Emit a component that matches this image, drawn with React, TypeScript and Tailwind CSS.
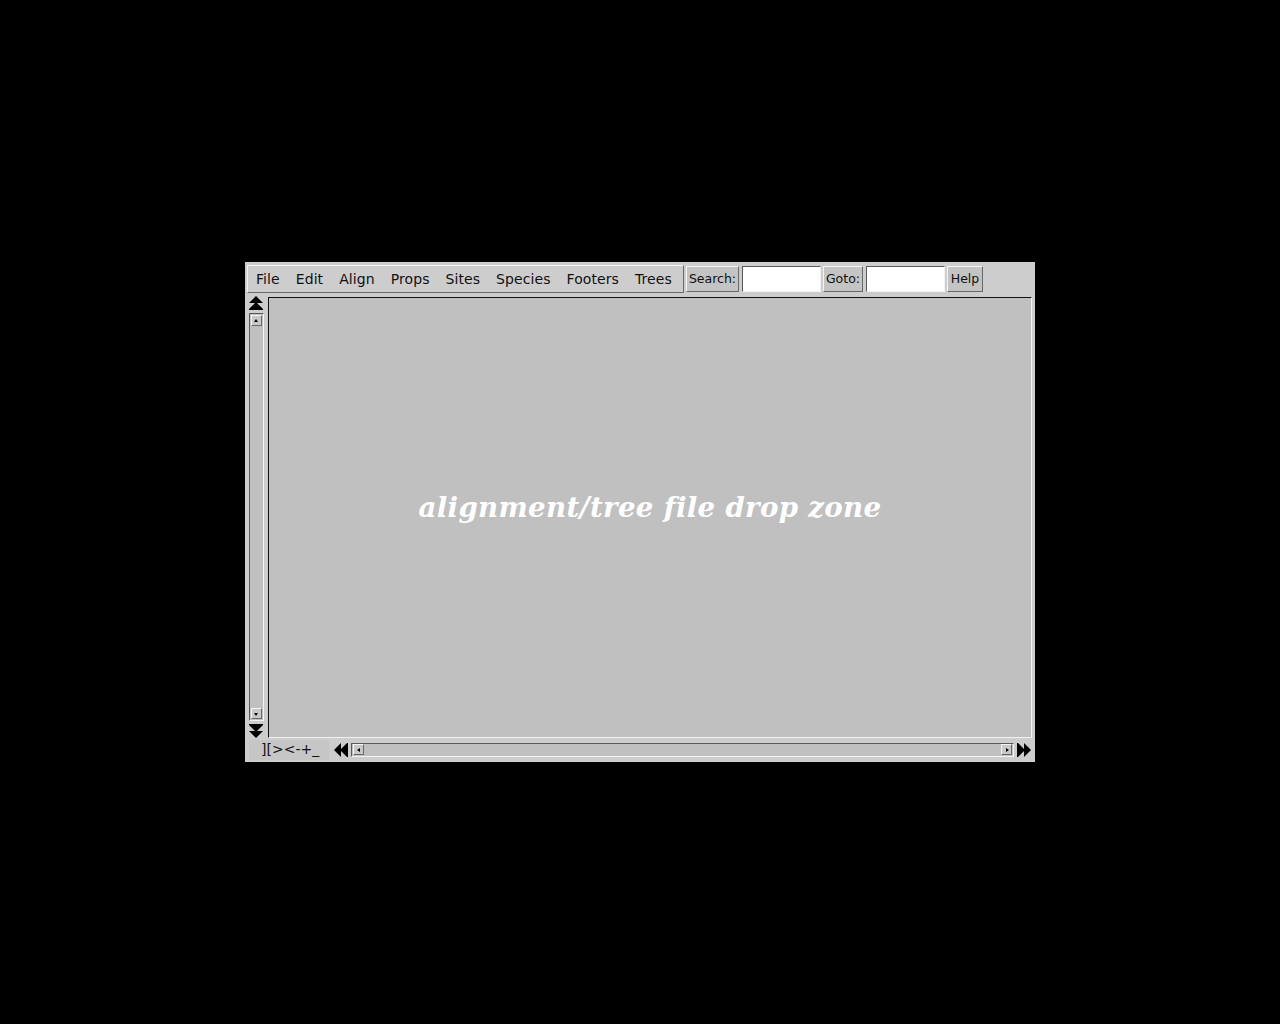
import React from "react";

const menus = ["File", "Edit", "Align", "Props", "Sites", "Species", "Footers", "Trees"];

// raised / sunken bevels, old AWT look
const raised = "border border-t-[#f4f4f4] border-l-[#f4f4f4] border-b-[#6a6a6a] border-r-[#6a6a6a]";
const sunken = "border border-t-[#5a5a5a] border-l-[#5a5a5a] border-b-[#f4f4f4] border-r-[#f4f4f4]";

function DoubleArrow({ dir }: { dir: "up" | "down" | "left" | "right" }) {
  const rot = { up: 0, down: 180, left: 270, right: 90 }[dir];
  return (
    <svg width="14" height="14" viewBox="0 0 14 14">
      <g transform={`rotate(${rot} 7 7)`}>
        <polygon points="7,0 14,7 0,7" fill="#000" />
        <polygon points="7,6 14,13 0,13" fill="#000" />
        <rect x="0" y="13" width="14" height="1" fill="#000" />
      </g>
    </svg>
  );
}

function SmallArrow({ dir }: { dir: "up" | "down" | "left" | "right" }) {
  const pts = {
    up: "2,5 4,2 6,5",
    down: "2,3 4,6 6,3",
    left: "5,2 2,4 5,6",
    right: "3,2 6,4 3,6",
  }[dir];
  return (
    <div className={`w-[11px] h-[11px] bg-[#c8c8c8] flex items-center justify-center ${raised}`}>
      <svg width="8" height="8" viewBox="0 0 8 8">
        <polygon points={pts} fill="#000" />
      </svg>
    </div>
  );
}

export default function App() {
  return (
    <div className="w-screen h-screen bg-black flex items-center justify-center">
      <div
        className="w-[790px] h-[500px] bg-[#cdcdcd] flex flex-col"
        style={{ fontFamily: '"DejaVu Sans", sans-serif' }}
      >
        {/* menu bar */}
        <div className="h-[33px] flex items-center pl-[2px] pt-[1px]">
          <div className={`h-[28px] w-[437px] flex items-center bg-[#cdcdcd] ${raised}`}>
            {menus.map((m) => (
              <span key={m} className="px-2 text-[14px] tracking-[0.08px] text-[#111]">
                {m}
              </span>
            ))}
          </div>
          <div className="flex items-center ml-[2px] text-[12.5px] text-[#111]">
            <div className={`h-[26px] w-[53px] flex items-center justify-center bg-[#c4c4c4] ${raised}`}>Search:</div>
            <div className={`h-[26px] w-[79px] ml-[3px] bg-white ${sunken}`} />
            <div className={`h-[26px] w-[40px] ml-[2px] flex items-center justify-center bg-[#c4c4c4] ${raised}`}>Goto:</div>
            <div className={`h-[26px] w-[79px] ml-[3px] bg-white ${sunken}`} />
            <div className={`h-[26px] w-[36px] ml-[2px] flex items-center justify-center bg-[#c4c4c4] ${raised}`}>Help</div>
          </div>
        </div>

        {/* middle */}
        <div className="flex-1 flex pl-[2px] pr-[3px]">
          <div className="w-[18px] flex flex-col items-center pt-[1px]">
            <DoubleArrow dir="up" />
            <div className={`flex-1 w-[15px] my-[3px] bg-[#c0c0c0] flex flex-col items-center justify-between py-[1px] ${sunken}`}>
              <SmallArrow dir="up" />
              <SmallArrow dir="down" />
            </div>
            <DoubleArrow dir="down" />
          </div>
          <div className="flex-1 ml-[3px] mt-[2px] border border-t-[#111] border-l-[#111] border-b-[#f2f2f2] border-r-[#f2f2f2] bg-[#c0c0c0] flex items-center justify-center pb-[20px]">
            <span
              className="text-white text-[27.7px] font-bold italic tracking-[0.3px]"
              style={{ fontFamily: '"DejaVu Serif", serif' }}
            >
              alignment/tree file drop zone
            </span>
          </div>
        </div>

        {/* bottom bar */}
        <div className="h-[24px] flex items-center pl-[4px] pr-[4px] pb-[1px]">
          <div className="w-[80px] h-[20px] bg-[#c6c6c6] flex items-center pl-[12px] text-[14px] text-[#111]">
            ][&gt;&lt;-+_
          </div>
          <div className="ml-[5px]">
            <DoubleArrow dir="left" />
          </div>
          <div className={`flex-1 h-[14px] mx-[3px] bg-[#c0c0c0] flex items-center justify-between px-[1px] ${sunken}`}>
            <SmallArrow dir="left" />
            <SmallArrow dir="right" />
          </div>
          <DoubleArrow dir="right" />
        </div>
      </div>
    </div>
  );
}
